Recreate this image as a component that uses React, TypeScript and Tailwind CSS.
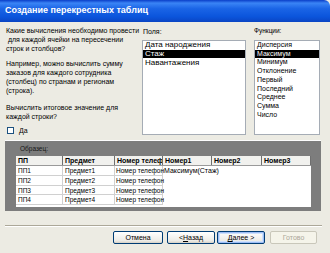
import React from "react";

const fields = ["Дата народжения", "Стаж", "Навантажения"];
const funcs = ["Дисперсия", "Максимум", "Минимум", "Отклонение", "Первый", "Последний", "Среднее", "Сумма", "Число"];
const rows = [
  ["ПП1", "Предмет1", "Номер телефон", "Максимум(Стаж)"],
  ["ПП2", "Предмет2", "Номер телефон", ""],
  ["ПП3", "Предмет3", "Номер телефон", ""],
  ["ПП4", "Предмет4", "Номер телефон", ""],
];
const heads = [
  ["ПП", "w-[47px]"],
  ["Предмет", "w-[52px]"],
  ["Номер телеф", "w-[48px]"],
  ["Номер1", "w-[49px]"],
  ["Номер2", "w-[50px]"],
  ["Номер3", "w-[49px]"],
];

function Btn({ children, kind }: { children: React.ReactNode; kind?: "default" | "disabled" }) {
  const base =
    "flex h-[13px] items-center justify-center rounded-[2px] border text-[7px] leading-none";
  if (kind === "disabled")
    return <div className={`${base} border-[#c9c7ba] bg-[#f5f4ea] text-[#aca899]`}>{children}</div>;
  if (kind === "default")
    return (
      <div className={`${base} border-[#003c74] bg-[linear-gradient(180deg,#ffffff,#ecebe6_80%,#d6d0c5)] shadow-[inset_0_0_0_1px_#9dbdf5,inset_0_0_0_2px_#cee0fb]`}>
        {children}
      </div>
    );
  return (
    <div className={`${base} border-[#003c74] bg-[linear-gradient(180deg,#ffffff,#ecebe6_80%,#d6d0c5)]`}>{children}</div>
  );
}

export default function App() {
  return (
    <div className="h-[253px] w-[330px] overflow-hidden bg-[#ecebe3] font-['Liberation_Sans',Arial,sans-serif] text-black">
      {/* title bar */}
      <div className="flex h-[22px] items-center rounded-tr-[6px] bg-[linear-gradient(180deg,#0a3ec8_0%,#3a84f5_14%,#1a64e6_40%,#0b55dc_75%,#0a45c4_100%)] pl-[5px] text-[9px] font-bold text-white">
        Создание перекрестных таблиц
      </div>

      {/* top section */}
      <div className="flex h-[118px] pt-[3px]">
        <div className="w-[142px] pl-[6px] pt-[0.5px] text-[7px] leading-[9px]">
          <p className="whitespace-nowrap">
            Какие вычисления необходимо провести
            <br />
            &nbsp;для каждой ячейки на пересечении
            <br />
            строк и столбцов?
          </p>
          <p className="mt-[6px] whitespace-nowrap">
            Например, можно вычислить сумму
            <br />
            заказов для каждого сотрудника
            <br />
            (столбец) по странам и регионам
            <br />
            (строка).
          </p>
          <p className="mt-[8px] whitespace-nowrap">
            Вычислить итоговое значение для
            <br />
            каждой строки?
          </p>
          <div className="mt-[5px] flex items-center gap-[5px] pl-[1px]">
            <div className="h-[7px] w-[7px] border border-[#1c5180] bg-white" />
            <span>
              <u>Д</u>а
            </span>
          </div>
        </div>

        <div className="w-[104px] pt-[2px]">
          <div className="h-[9px] pl-[1px] text-[7px] leading-[9px]">Поля:</div>
          <div className="mt-[4px] h-[95px] border border-[#a5acb5] bg-white text-[8px]">
            {fields.map((f, i) => (
              <div
                key={f}
                className={`flex h-[8.7px] items-center pl-[2px] ${i === 1 ? "bg-black text-white" : ""}`}
              >
                {f}
              </div>
            ))}
          </div>
        </div>

        <div className="ml-[8px] w-[66px] pt-[1px]">
          <div className="h-[9px] text-[6.5px] leading-[9px]">Функции:</div>
          <div className="mt-[5px] h-[95px] border border-[#a5acb5] bg-white text-[7px]">
            {funcs.map((f, i) => (
              <div
                key={f}
                className={`flex h-[8.7px] items-center pl-[2px] ${i === 1 ? "bg-black text-white" : ""}`}
              >
                {f}
              </div>
            ))}
          </div>
        </div>
      </div>

      {/* sample */}
      <div className="ml-[5px] h-[71px] w-[316px] border-t border-[#fdfdfd] bg-[#7d7d7d] pl-[11px] pt-[3px]">
        <div className="h-[10px] pl-[4px] text-[6.5px] leading-[10px] text-[#151515]">Образец:</div>
        <div className="mt-[2px] h-[51px] w-[295px] bg-white text-[6.5px]">
          <div className="flex h-[10px] border-b border-[#9a9a9a] bg-[#f1f1ee] text-[7px] font-bold">
            {heads.map(([h, w]) => (
              <div
                key={h}
                className={`${w} overflow-hidden whitespace-nowrap border-r border-[#6f6f6f] pl-[2px] leading-[9px]`}
              >
                {h}
              </div>
            ))}
          </div>
          {rows.map((r) => (
            <div key={r[0]} className="flex h-[9.8px] leading-[9.5px]">
              <div className="w-[47px] border-b border-r border-[#d0d0d0] pl-[2px]">{r[0]}</div>
              <div className="w-[52px] border-b border-r border-[#d0d0d0] pl-[2px]">{r[1]}</div>
              <div className="w-[48px] whitespace-nowrap border-b border-r border-[#d0d0d0] pl-[1px]">
                {r[2]}
              </div>
              <div className="whitespace-nowrap pl-[1px] text-[7px]">{r[3]}</div>
            </div>
          ))}
        </div>
      </div>

      {/* separator */}
      <div className="ml-[5px] mt-[14px] w-[317px] border-t border-b border-t-[#aca899] border-b-white" />

      {/* buttons */}
      <div className="mt-[4px] flex pl-[113px]">
        <div className="w-[50px]">
          <Btn>Отмена</Btn>
        </div>
        <div className="ml-[4px] w-[48px]">
          <Btn>
            &lt; <u>Н</u>азад
          </Btn>
        </div>
        <div className="ml-[2px] w-[48px]">
          <Btn kind="default">
            <u>Д</u>алее &gt;
          </Btn>
        </div>
        <div className="ml-[5px] w-[47px]">
          <Btn kind="disabled">Готово</Btn>
        </div>
      </div>
    </div>
  );
}
